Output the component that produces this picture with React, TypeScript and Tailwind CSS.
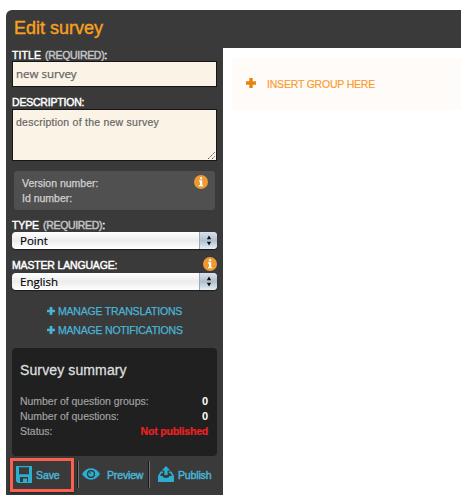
import React from "react";

const sans = "font-['Liberation_Sans',Arial,sans-serif]";
const humanist = "font-['Open_Sans','Noto_Sans',sans-serif]";

function InfoIcon() {
  return (
    <svg width="14" height="14" viewBox="0 0 14 14" className="shrink-0">
      <circle cx="7" cy="7" r="7" fill="#ee9a30" />
      <path d="M5.9 2.3h2.2v1.9H5.9zM5 5.3h3.2v4.6h1v1.3H5V9.9h1V6.6H5z" fill="#fff" />
    </svg>
  );
}

function Plus({ size, color }: { size: number; color: string }) {
  return (
    <svg width={size} height={size} viewBox="0 0 10 10" className="-mt-[2px] shrink-0">
      <path d="M3.3 0h3.4v3.3H10v3.4H6.7V10H3.3V6.7H0V3.3h3.3z" fill={color} />
    </svg>
  );
}

function Label({ text, required, spacing }: { text: string; required?: boolean; spacing: string }) {
  return (
    <div className="flex whitespace-pre text-[10.5px] leading-[14px] text-white [-webkit-text-stroke:0.45px_currentColor]">
      <span className={spacing}>{text}</span>
      {required && <span className="ml-[4px] tracking-[-0.32px] text-[#c4c4c4]">(REQUIRED)</span>}
      <span>:</span>
    </div>
  );
}

function Select({ value }: { value: string }) {
  return (
    <div className="flex h-[17px] w-[205px] overflow-hidden rounded-[4px] bg-gradient-to-b from-white via-[#ececec] to-white shadow-[0_1px_1px_#1a1a1a]">
      <span className={`flex-1 pl-2 text-[11.5px] leading-[17px] text-black [-webkit-text-stroke:0.15px_currentColor] ${humanist}`}>{value}</span>
      <span className="flex w-[18px] items-center justify-center border-l border-[#9aa8b8] bg-gradient-to-b from-[#d9e2ec] via-[#b0bfce] to-[#e4f0f8]">
        <svg width="6" height="11" viewBox="0 0 6 11">
          <path d="M3 0.5L5.2 4.2H.8zM3 10.5L.8 6.8h4.4z" fill="#111" />
        </svg>
      </span>
    </div>
  );
}

function ManageLink({ text }: { text: string }) {
  return (
    <div className="flex h-[19px] items-center pl-[35px] text-[#49b4d6]">
      <Plus size={8} color="#49b4d6" />
      <span className="ml-[3px] whitespace-nowrap text-[10.5px] leading-[19px] tracking-[-0.2px] [-webkit-text-stroke:0.25px_currentColor]">{text}</span>
    </div>
  );
}

function SummaryRow({ label, value, red }: { label: string; value: string; red?: boolean }) {
  return (
    <div className="flex h-[15px] justify-between text-[10.5px] leading-[15px] text-[#a3a3a3]">
      <span className="tracking-[-0.04px] [-webkit-text-stroke:0.15px_currentColor]">{label}</span>
      <b className={red ? "tracking-[-0.2px] text-[#ed2024] [-webkit-text-stroke:0.2px_currentColor]" : "text-[11px] text-white"}>{value}</b>
    </div>
  );
}

function Divider() {
  return <div className="mt-[3px] h-[27px] w-[2px] shrink-0 border-l border-[#191919] bg-[#707070]" />;
}

const actionText = "text-[10.5px] leading-[14px] [-webkit-text-stroke:0.45px_currentColor]";

export default function App() {
  return (
    <div className={`h-[501px] w-[461px] overflow-hidden bg-white pl-[6px] pt-[10px] ${sans}`}>
      <header className="h-[38px] rounded-tl-[6px] bg-[#3a3a3a] pl-2 pt-[7px]">
        <h1 className="text-[18px] leading-[22px] text-[#f7a01f] [-webkit-text-stroke:0.4px_currentColor]">Edit survey</h1>
      </header>
      <div className="flex">
        <aside className="flex h-[447px] w-[217px] shrink-0 flex-col bg-[#3a3a3a] px-[6px]">
          <div className="h-[13px]">
            <Label text="TITLE" required spacing="tracking-[0.1px]" />
          </div>
          <div className={`h-[26px] w-[205px] border border-[#161616] bg-[#faf3e6] pl-[3px] text-[11.5px] leading-[24px] text-[#666] [-webkit-text-stroke:0.25px_currentColor] ${humanist}`}>new survey</div>
          <div className="mt-2 h-[14px]">
            <Label text="DESCRIPTION" spacing="tracking-[-0.2px]" />
          </div>
          <div className="flex h-[52px] w-[205px] items-start justify-between border border-[#161616] bg-[#faf3e6] pl-[3px] text-[10.5px] leading-[14px] text-[#666]">
            <span className="mt-[5px] whitespace-nowrap tracking-[0.24px] [-webkit-text-stroke:0.2px_currentColor]">description of the new survey</span>
            <svg width="9" height="9" viewBox="0 0 9 9" className="self-end">
              <path d="M1 8L8 1M5 8l3-3" stroke="#555" strokeWidth="1" strokeDasharray="1.5 .7" />
            </svg>
          </div>
          <div className="ml-[2px] mt-[10px] flex h-[39px] w-[201px] justify-between rounded-[3px] bg-[#505050] pl-2 pr-[7px] pt-1">
            <div className="pt-px text-[10.5px] leading-[15px] text-[#d2d2d2] [-webkit-text-stroke:0.25px_currentColor]">
              <div>Version number:</div>
              <div>Id number:</div>
            </div>
            <InfoIcon />
          </div>
          <div className="mt-2 h-[14px]">
            <Label text="TYPE" required spacing="tracking-[-0.1px]" />
          </div>
          <Select value="Point" />
          <div className="mt-2 flex h-[16px] justify-between">
            <div className="pt-px">
              <Label text="MASTER LANGUAGE" spacing="tracking-[-0.17px]" />
            </div>
            <InfoIcon />
          </div>
          <Select value="English" />
          <div className="mt-[12px]">
            <ManageLink text="MANAGE TRANSLATIONS" />
            <ManageLink text="MANAGE NOTIFICATIONS" />
          </div>
          <section className="mt-2 h-[108px] w-[205px] shrink-0 rounded-[4px] bg-[#202020] px-2 pt-[13px]">
            <h2 className="text-[14px] leading-[18px] tracking-[0.12px] text-[#dedede] [-webkit-text-stroke:0.3px_currentColor]">Survey summary</h2>
            <div className="mt-[15px] pr-px">
              <SummaryRow label="Number of question groups:" value="0" />
              <SummaryRow label="Number of questions:" value="0" />
              <SummaryRow label="Status:" value="Not published" red />
            </div>
          </section>
          <div className="-ml-[2px] mt-[2px] flex h-[34px] w-[209px] text-[#49b4d6]">
            <div className="flex h-[34px] w-[64px] shrink-0 items-center border-[3px] border-[#f9604f] pl-[3px] shadow-[0_1px_2px_#222]">
              <svg width="16" height="17" viewBox="0 0 16 17" className="-mt-[2px]">
                <path fillRule="evenodd" d="M0 0h16v17H2L0 15.2zM3 1.2v7h10v-7zM4 11v5h8v-5z" fill="#2caed0" />
                <path d="M7 12.500h4v3.500H7z" fill="#2caed0" />
              </svg>
              <span className={`ml-1 tracking-[-0.1px] ${actionText}`}>Save</span>
            </div>
            <div className="w-[3px] shrink-0" />
            <Divider />
            <div className="flex w-[69px] shrink-0 items-center pl-[3px]">
              <svg width="18" height="12" viewBox="0 0 18 12" className="-mt-[2px] shrink-0">
                <path d="M0 6Q3.5 .3 9 .3T18 6q-3.5 5.7-9 5.7T0 6z" fill="#2caed0" />
                <circle cx="9" cy="6" r="4" fill="#303030" />
                <circle cx="9" cy="6" r="2.8" fill="#2caed0" />
                <circle cx="8" cy="5" r=".8" fill="#303030" />
              </svg>
              <span className={`ml-[7px] tracking-[-0.15px] ${actionText}`}>Preview</span>
            </div>
            <Divider />
            <div className="flex items-center pl-2">
              <svg width="16" height="16" viewBox="0 0 16 16" className="-mt-[3px] shrink-0">
                <path d="M8 0l4.2 4.4H9.6V9H6.4V4.4H3.8z" fill="#2caed0" />
                <path d="M2.5 5.500h2.600v1.500H3.700L2 10h2.500q.5 2 3.500 2t3.500-2H14l-1.700-3h-1.400V5.500h2.600L16 10v6H0v-6z" fill="#2caed0" />
              </svg>
              <span className={`ml-1 tracking-[-0.15px] ${actionText}`}>Publish</span>
            </div>
          </div>
        </aside>
        <main className="flex-1 pl-[9px] pt-[10px]">
          <div className="flex h-[52px] items-center bg-[#fffbf8] pl-[14px]">
            <Plus size={10} color="#e9820b" />
            <span className="-mt-px ml-[11px] text-[10.5px] leading-[14px] tracking-[-0.2px] text-[#fb9a2c] [-webkit-text-stroke:0.15px_currentColor]">INSERT GROUP HERE</span>
          </div>
        </main>
      </div>
    </div>
  );
}
